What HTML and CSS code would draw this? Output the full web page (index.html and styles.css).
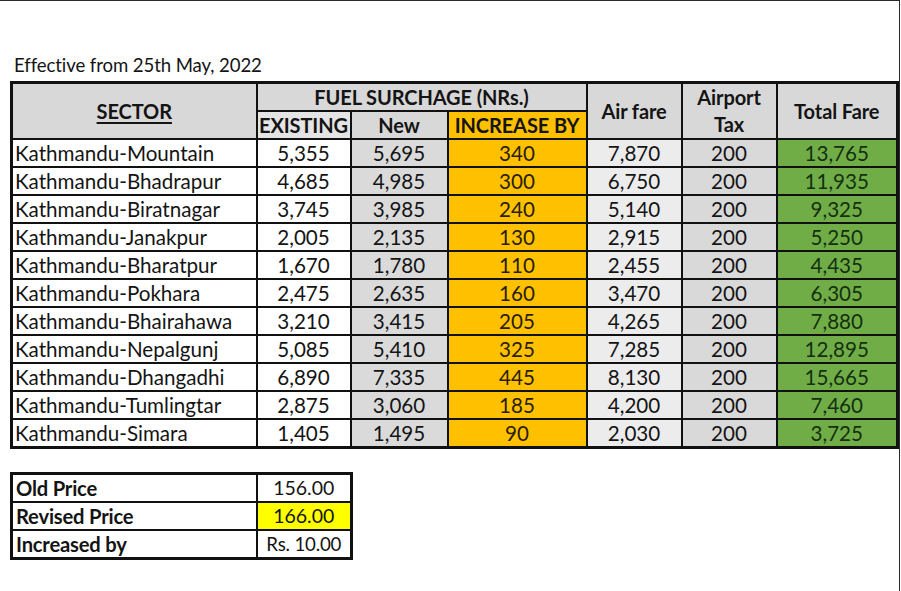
FILE: index.html
```html
<!DOCTYPE html>
<html>
<head>
<meta charset="utf-8">
<link rel="stylesheet" href="styles.css">
</head>
<body>
<div class="page">
  <div class="title">Effective from 25th May, 2022</div>
  <table class="fares">
    <colgroup>
      <col class="c-sector"><col class="c-exist"><col class="c-new"><col class="c-inc"><col class="c-air"><col class="c-tax"><col class="c-total">
    </colgroup>
    <thead>
      <tr>
        <th rowspan="2" class="h-gray"><span class="ul">SECTOR</span></th>
        <th colspan="3" class="h-gray">FUEL SURCHAGE (NRs.)</th>
        <th rowspan="2" class="h-gray">Air fare</th>
        <th rowspan="2" class="h-gray tax">Airport<br>Tax</th>
        <th rowspan="2" class="h-gray">Total Fare</th>
      </tr>
      <tr>
        <th class="h-light">EXISTING</th>
        <th class="h-gray">New</th>
        <th class="h-orange">INCREASE BY</th>
      </tr>
    </thead>
    <tbody>
      <tr><td class="sector">Kathmandu-Mountain</td><td>5,355</td><td class="new">5,695</td><td class="inc">340</td><td class="air">7,870</td><td class="tax">200</td><td class="total">13,765</td></tr>
      <tr><td class="sector">Kathmandu-Bhadrapur</td><td>4,685</td><td class="new">4,985</td><td class="inc">300</td><td class="air">6,750</td><td class="tax">200</td><td class="total">11,935</td></tr>
      <tr><td class="sector">Kathmandu-Biratnagar</td><td>3,745</td><td class="new">3,985</td><td class="inc">240</td><td class="air">5,140</td><td class="tax">200</td><td class="total">9,325</td></tr>
      <tr><td class="sector">Kathmandu-Janakpur</td><td>2,005</td><td class="new">2,135</td><td class="inc">130</td><td class="air">2,915</td><td class="tax">200</td><td class="total">5,250</td></tr>
      <tr><td class="sector">Kathmandu-Bharatpur</td><td>1,670</td><td class="new">1,780</td><td class="inc">110</td><td class="air">2,455</td><td class="tax">200</td><td class="total">4,435</td></tr>
      <tr><td class="sector">Kathmandu-Pokhara</td><td>2,475</td><td class="new">2,635</td><td class="inc">160</td><td class="air">3,470</td><td class="tax">200</td><td class="total">6,305</td></tr>
      <tr><td class="sector">Kathmandu-Bhairahawa</td><td>3,210</td><td class="new">3,415</td><td class="inc">205</td><td class="air">4,265</td><td class="tax">200</td><td class="total">7,880</td></tr>
      <tr><td class="sector">Kathmandu-Nepalgunj</td><td>5,085</td><td class="new">5,410</td><td class="inc">325</td><td class="air">7,285</td><td class="tax">200</td><td class="total">12,895</td></tr>
      <tr><td class="sector">Kathmandu-Dhangadhi</td><td>6,890</td><td class="new">7,335</td><td class="inc">445</td><td class="air">8,130</td><td class="tax">200</td><td class="total">15,665</td></tr>
      <tr><td class="sector">Kathmandu-Tumlingtar</td><td>2,875</td><td class="new">3,060</td><td class="inc">185</td><td class="air">4,200</td><td class="tax">200</td><td class="total">7,460</td></tr>
      <tr><td class="sector">Kathmandu-Simara</td><td>1,405</td><td class="new">1,495</td><td class="inc">90</td><td class="air">2,030</td><td class="tax">200</td><td class="total">3,725</td></tr>
    </tbody>
  </table>

  <table class="price">
    <colgroup><col class="p-label"><col class="p-val"></colgroup>
    <tr><td class="label">Old Price</td><td>156.00</td></tr>
    <tr><td class="label">Revised Price</td><td class="yellow">166.00</td></tr>
    <tr><td class="label">Increased by</td><td class="small">Rs. 10.00</td></tr>
  </table>
</div>
</body>
</html>
```

FILE: styles.css
```css
html, body {
  margin: 0;
  padding: 0;
  background: #ffffff;
}

.page {
  box-sizing: border-box;
  width: 900px;
  height: 591px;
  border-top: 1px solid #2a2a2a;
  border-right: 1px solid #2a2a2a;
  padding: 53px 0 0 10px;
  font-family: "Lato", "Liberation Sans", sans-serif;
  color: #141414;
}

.title {
  font-size: 18.6px;
  line-height: 22px;
  padding-left: 4px;
  height: 27px;
  letter-spacing: -0.1px;
}

table {
  border-collapse: collapse;
  table-layout: fixed;
}

.fares {
  width: 886px;
  border: 3px solid #111;
}

.c-sector { width: 245px; }
.c-exist { width: 94px; }
.c-new { width: 97px; }
.c-inc { width: 139px; }
.c-air { width: 95px; }
.c-tax { width: 95px; }
.c-total { width: 121px; }

.fares th,
.fares td {
  border: 2px solid #111;
  height: 26px;
  padding: 0;
  font-size: 20.6px;
  line-height: 24px;
  text-align: center;
  vertical-align: middle;
  white-space: nowrap;
}

.fares th {
  font-weight: 700;
  font-size: 20px;
  letter-spacing: -0.1px;
}

.fares th.tax {
  line-height: 27px;
}

.ul {
  text-decoration: underline;
  text-underline-offset: 3px;
  text-decoration-thickness: 2px;
}

.h-gray { background: #d8d8d8; }
.h-light { background: #e4e4e4; }
.h-orange { background: #ffc000; }

.fares td.sector {
  text-align: left;
  padding-left: 2px;
  background: #ffffff;
}

.fares td.new { background: #dadada; }
.fares td.inc { background: #ffc000; color: #2a1e00; }
.fares td.air { background: #ececec; }
.fares td.tax { background: #d9d9d9; }
.fares td.total { background: #70ad47; color: #143010; }

.price {
  margin-top: 23px;
  width: 340px;
  border: 3px solid #111;
}

.p-label { width: 245px; }
.p-val { width: 95px; }

.price td {
  border: 2px solid #111;
  height: 26px;
  padding: 0;
  font-size: 19.5px;
  line-height: 24px;
  text-align: center;
  white-space: nowrap;
}

.price td.label {
  text-align: left;
  padding-left: 3px;
  font-size: 20.2px;
  font-weight: 700;
  letter-spacing: -0.2px;
}

.price td.small {
  font-size: 18.7px;
  letter-spacing: -0.2px;
}

.price td.yellow { background: #ffff00; }
```
